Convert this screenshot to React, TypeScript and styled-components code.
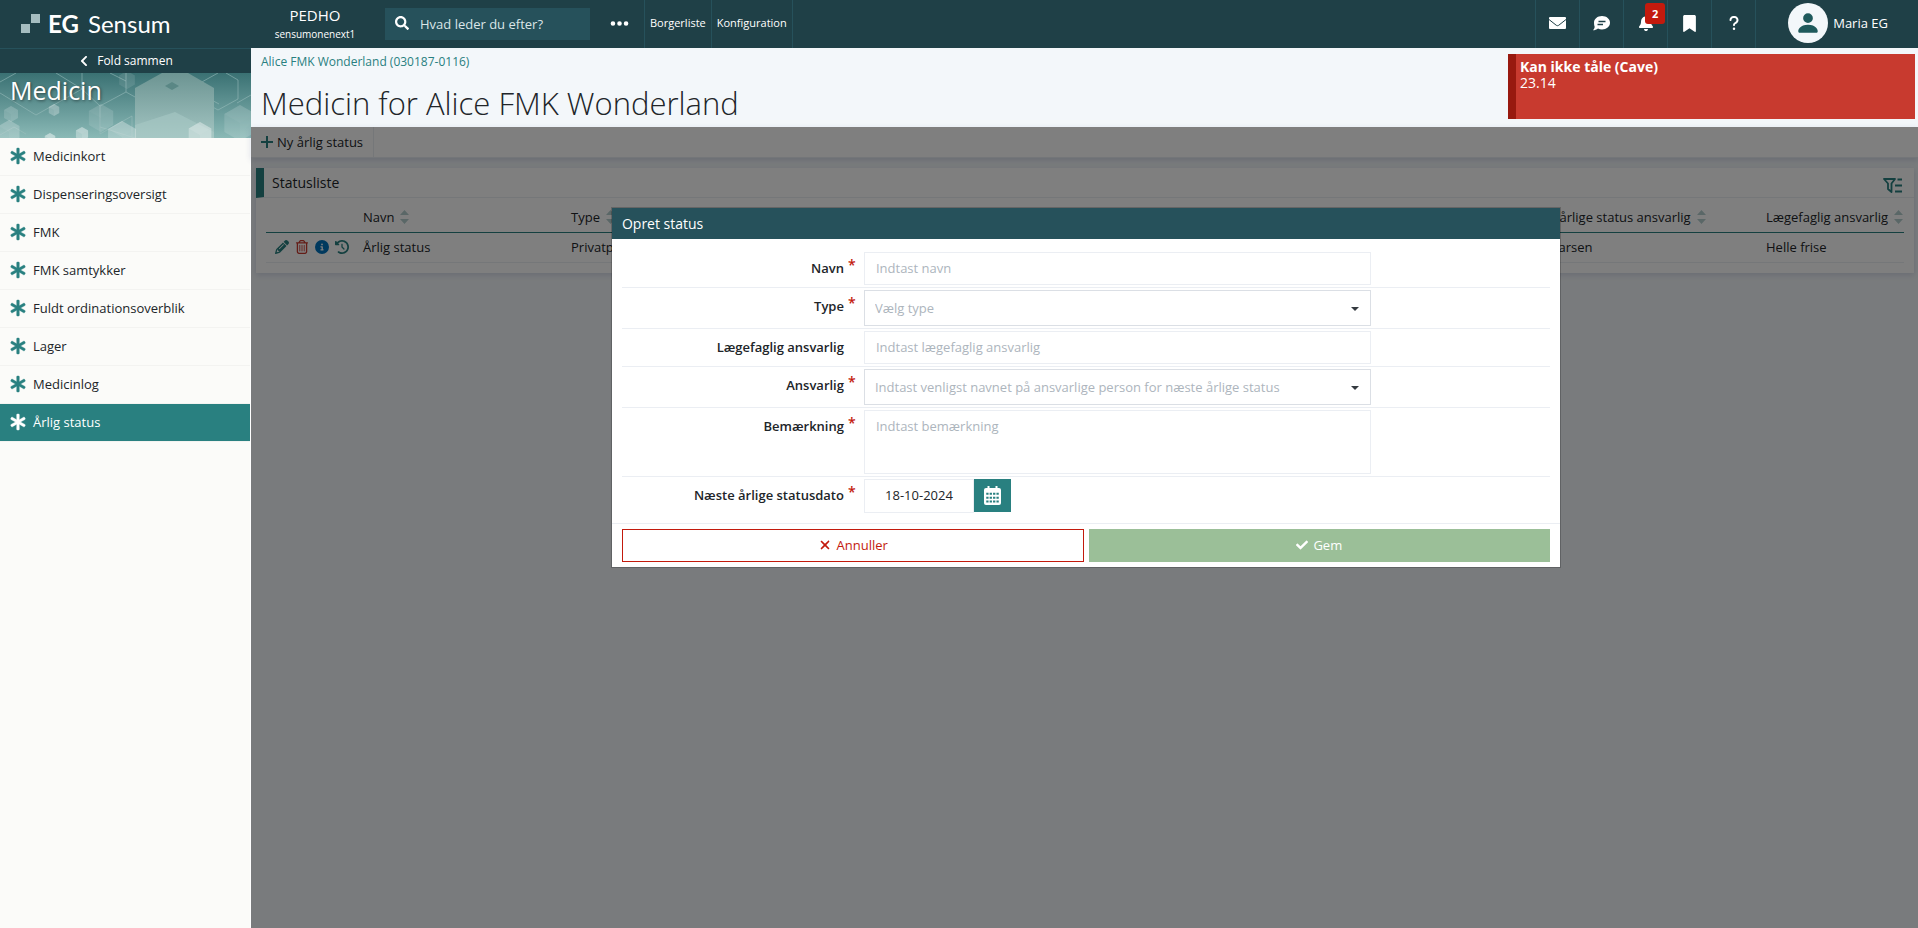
import React from 'react';
import styled, { createGlobalStyle } from 'styled-components';
import {
  FaEllipsis,
  FaBell,
  FaBookmark,
  FaQuestion,
  FaPencil,
  FaRegTrashCan,
  FaCircleInfo,
  FaClockRotateLeft,
  FaXmark,
} from 'react-icons/fa6';
import { FaAsterisk, FaCheck, FaChevronLeft, FaSearch } from 'react-icons/fa';
import { BsPersonFill } from 'react-icons/bs';

const color = {
  header: '#1f4047',
  headerLine: '#26515b',
  panel: '#26515b',
  teal: '#298080',
  text: '#212529',
  page: '#f3f7fa',
  line: '#ebeef3',
  red: '#c31a0d',
  muted: '#adb5bd',
};

const GlobalStyle = createGlobalStyle`
  *, *::before, *::after { box-sizing: border-box; }
  body {
    margin: 0;
    font-family: "Open Sans", "Noto Sans", sans-serif;
    font-size: 14px;
    line-height: 20px;
    color: ${color.text};
    background: ${color.page};
  }
  button, input, select, textarea { font: inherit; color: inherit; border-radius: 0; }
  a { color: inherit; text-decoration: none; }
`;

const Page = styled.div`
  display: flex;
  flex-direction: column;
  min-height: 100vh;
`;

/* Top bar */

const TopBar = styled.header`
  display: flex;
  height: 48px;
  background: ${color.header};
  color: #fff;
`;

const Logo = styled.a`
  display: flex;
  align-items: center;
  gap: 8px;
  width: 251px;
  padding-left: 20px;
  font-family: Lato, "Open Sans", sans-serif;
  font-size: 24px;
  line-height: 46px;
  white-space: nowrap;

  b { margin-right: 3px; }
`;

const Tenant = styled.div`
  display: flex;
  flex-direction: column;
  align-items: center;
  width: 128px;
  padding-top: 5px;
  font-size: 15px;
  line-height: 20px;

  small { font-size: 10px; line-height: 18px; }
`;

const SearchBox = styled.label`
  display: flex;
  align-items: center;
  gap: 11px;
  width: 205px;
  height: 32px;
  margin: 8px 0 0 6px;
  padding: 0 10px;
  background: ${color.panel};

  svg { flex: none; margin-bottom: 2px; }

  input {
    min-width: 0;
    flex: 1;
    padding: 0;
    border: 0;
    outline: 0;
    background: none;
    font-size: 13px;
  }
  input::placeholder { color: #dbe6e8; opacity: 1; }
`;

const MoreButton = styled.button`
  display: flex;
  align-items: center;
  justify-content: center;
  width: 54px;
  height: 46px;
  padding: 0 0 0 5px;
  border: 0;
  background: none;
`;

const NavLink = styled.a`
  padding: 0 5px;
  border-left: 1px solid ${color.headerLine};
  font-size: 11px;
  line-height: 46px;
  white-space: nowrap;

  &:last-child { border-right: 1px solid ${color.headerLine}; }
`;

const TopLinks = styled.nav`
  display: flex;
`;

const TopIcons = styled.div`
  display: flex;
  margin-left: auto;
  border-right: 1px solid ${color.headerLine};
`;

const TopIcon = styled.button`
  position: relative;
  display: flex;
  align-items: center;
  justify-content: center;
  width: 44px;
  padding: 0 0 2px;
  border: 0;
  border-left: 1px solid ${color.headerLine};
  background: none;
  color: #fff;
`;

const Badge = styled.span`
  position: absolute;
  top: 3px;
  right: 2px;
  width: 20px;
  border-radius: 3px;
  background: ${color.red};
  font-size: 11px;
  font-weight: 700;
  line-height: 21px;
`;

const User = styled.a`
  display: flex;
  align-items: center;
  gap: 5px;
  height: 46px;
  padding: 0 30px 0 32px;
  font-size: 13px;
`;

const Avatar = styled.span`
  display: flex;
  align-items: center;
  justify-content: center;
  width: 40px;
  height: 40px;
  border-radius: 50%;
  background: ${color.page};
  color: #1f5a5c;
`;

/* Side bar */

const Body = styled.div`
  display: flex;
  flex: 1;
`;

const SideBar = styled.aside`
  flex: none;
  width: 251px;
  border-right: 1px solid #fff;
  background: #fbfbf9;
`;

const FoldButton = styled.button`
  display: flex;
  align-items: center;
  justify-content: center;
  gap: 7px;
  width: 251px;
  height: 25px;
  padding: 0;
  border: 0;
  border-top: 1px solid ${color.headerLine};
  background: ${color.header};
  color: #fff;
  font-size: 12px;
`;

const Banner = styled.div`
  position: relative;
  width: 251px;
  height: 65px;

  svg { display: block; width: 100%; height: 100%; }

  h2 {
    position: absolute;
    top: 0;
    left: 10px;
    margin: 0;
    color: #fff;
    font-size: 25px;
    font-weight: 400;
    line-height: 34px;
    text-shadow: 1px 1px 3px rgba(0, 0, 0, 0.5);
  }
`;

const MenuItem = styled.a<{ $active?: boolean }>`
  display: flex;
  align-items: center;
  gap: 7px;
  height: 38px;
  padding: 0 0 2px 10px;
  border-bottom: 1px solid #f3f3f1;
  background: ${(p) => (p.$active ? color.teal : 'transparent')};
  color: ${(p) => (p.$active ? '#fff' : color.text)};
  font-size: 13px;

  svg {
    overflow: visible;
    color: ${(p) => (p.$active ? '#fff' : color.teal)};
    stroke: currentColor;
    stroke-width: 12px;
  }
`;

/* Main column */

const Main = styled.main`
  display: flex;
  flex: 1;
  flex-direction: column;
  min-width: 0;
`;

const PageHead = styled.div`
  display: flex;
  justify-content: space-between;
  height: 79px;
  padding: 0 3px 0 10px;
`;

const Crumb = styled.a`
  display: block;
  padding-top: 4px;
  color: ${color.teal};
  font-size: 12px;
  line-height: 20px;
`;

const Title = styled.h1`
  margin: 8px 0 0;
  font-size: 31px;
  font-weight: 300;
  line-height: 46px;
`;

const Cave = styled.section`
  width: 407px;
  height: 65px;
  margin-top: 6px;
  padding: 5px 4px;
  border-left: 8px solid #98190f;
  background: #c83a2f;
  color: #fff;
  line-height: 16px;

  strong { display: block; }
`;

const Content = styled.div`
  position: relative;
  flex: 1;
`;

const ToolBar = styled.div`
  display: flex;
  height: 31px;
  border-bottom: 1px solid #e8edf2;
  background: #fff;
  box-shadow: 0 2px 6px rgba(60, 80, 140, 0.18);
`;

const ToolButton = styled.button`
  display: flex;
  align-items: center;
  gap: 4px;
  padding: 0 10px;
  border: 0;
  border-right: 1px solid ${color.line};
  background: none;
  font-size: 13px;

  svg { color: ${color.teal}; }
`;

const Card = styled.section`
  margin: 10px 4px 0 5px;
  padding-bottom: 10px;
  background: #fff;
  box-shadow: 0 2px 6px rgba(60, 80, 140, 0.18);
`;

const CardHead = styled.div`
  display: flex;
  align-items: center;
  justify-content: space-between;
  height: 30px;
  padding: 0 11px 0 8px;
  border-left: 8px solid ${color.teal};
  border-bottom: 1px solid ${color.line};

  h3 { margin: 0; font-size: 14px; font-weight: 400; }
`;

const FilterButton = styled.button`
  display: flex;
  align-self: flex-end;
  padding: 0 0 4px;
  border: 0;
  background: none;
  color: ${color.teal};
`;

const Table = styled.table`
  width: calc(100% - 20px);
  margin: 0 10px;
  border-collapse: separate;
  border-spacing: 0;
  table-layout: fixed;
  font-size: 13px;
  white-space: nowrap;

  th {
    height: 35px;
    padding: 4px 0 0;
    border-bottom: 1px solid ${color.teal};
    font-weight: 400;
    text-align: left;
  }
  td {
    height: 30px;
    padding: 0 0 2px;
    border-bottom: 1px solid ${color.line};
  }
`;

const Heading = styled.span`
  display: flex;
  align-items: center;
  gap: 6px;
`;

const RowActions = styled.div`
  display: flex;
  gap: 6px;
  padding-left: 9px;
`;

const RowAction = styled.button<{ $tone: string }>`
  display: flex;
  padding: 0;
  border: 0;
  background: none;
  color: ${(p) => p.$tone};
`;

/* Dialog */

const Overlay = styled.div`
  position: absolute;
  inset: 0;
  display: flex;
  align-items: flex-start;
  justify-content: center;
  padding: 80px 0 0 3px;
  background: rgba(0, 0, 0, 0.5);
`;

const Dialog = styled.form`
  width: 57.1%;
  border: 1px solid rgba(0, 0, 0, 0.2);
  background: #fff;
  background-clip: padding-box;
`;

const DialogTitle = styled.h2`
  margin: 0;
  padding: 0 10px;
  background: ${color.panel};
  color: #fff;
  font-size: 14px;
  font-weight: 400;
  line-height: 31px;
`;

const Fields = styled.div`
  padding: 11px 10px 10px;
`;

const Row = styled.div`
  display: grid;
  grid-template-columns: 242fr 507fr 179fr;
  padding: 2px 0;
  border-bottom: 1px solid ${color.line};

  &:last-child { padding-bottom: 0; border-bottom: 0; }
`;

const Label = styled.label`
  display: flex;
  justify-content: flex-end;
  padding-right: 20px;
  font-size: 13px;
  font-weight: 600;
  line-height: 33px;
`;

const Star = styled.span`
  width: 12px;
  margin: -4px -16px 0 4px;
  color: ${color.red};
  font-size: 14px;
`;

const Input = styled.input`
  width: 100%;
  height: 33px;
  padding: 0 11px 2px;
  border: 1px solid ${color.line};
  background: #fff;
  font-size: 13px;

  &::placeholder { color: ${color.muted}; opacity: 1; }
`;

const TextArea = styled.textarea`
  display: block;
  width: 100%;
  height: 64px;
  padding: 5px 11px;
  border: 1px solid ${color.line};
  font-size: 13px;
  resize: none;

  &::placeholder { color: ${color.muted}; opacity: 1; }
`;

const SelectBox = styled.div`
  position: relative;

  select {
    display: block;
    width: 100%;
    height: 36px;
    padding: 0 30px 0 10px;
    border: 1px solid #dbdfe5;
    appearance: none;
    background: #fff;
    color: ${color.muted};
    font-size: 13px;
  }

  svg {
    position: absolute;
    top: 17px;
    right: 12px;
    pointer-events: none;
  }
`;

const DateField = styled.div`
  display: flex;

  input { width: 110px; height: 34px; text-align: center; }

  button {
    display: flex;
    align-items: center;
    justify-content: center;
    width: 37px;
    height: 33px;
    padding: 0;
    border: 0;
    background: ${color.teal};
    color: #fff;
  }
`;

const DialogFoot = styled.div`
  display: flex;
  gap: 5px;
  padding: 5px 10px;
  border-top: 1px solid ${color.line};
`;

const FootButton = styled.button<{ $primary?: boolean }>`
  display: flex;
  flex: 1;
  align-items: center;
  justify-content: center;
  gap: 5px;
  height: 33px;
  padding: 0 0 2px;
  border: 1px solid ${(p) => (p.$primary ? '#9bbf98' : color.red)};
  background: ${(p) => (p.$primary ? '#9bbf98' : '#fff')};
  color: ${(p) => (p.$primary ? '#fff' : color.red)};
  font-size: 13px;
`;

const LogoMark = () => (
  <svg width="20" height="20" viewBox="0 0 20 20" aria-hidden="true">
    <rect x="11" y="0" width="9" height="9" fill="#a5bdc0" />
    <rect x="1" y="10" width="9" height="9" fill="#a5bdc0" />
  </svg>
);

const EnvelopeIcon = () => (
  <svg width="17" height="12" viewBox="0 0 17 12" aria-hidden="true">
    <rect width="17" height="12" rx="1" fill="currentColor" />
    <path d="M0 2.500 7.300 8.300q1.200.8 2.400 0L17 2.500" fill="none" stroke={color.header} />
  </svg>
);

const ChatIcon = () => (
  <svg width="17" height="15" viewBox="0 0 17 15" aria-hidden="true">
    <path
      d="M9 0c4.500 0 8 2.900 8 6.700s-3.500 6.700-8 6.700c-1.500 0-2.800-.3-4-.9C3.600 13.600 1.800 14.300 0 14.300c.9-1 1.500-2.200 1.700-3.400C1.200 9.700 1 8.200 1 6.700 1 2.900 4.500 0 9 0z"
      fill="currentColor"
    />
    <path d="M5.500 5.500h7M4.500 8.500h5.500" stroke={color.header} strokeWidth="1.300" />
  </svg>
);

const PlusIcon = () => (
  <svg width="12" height="12" viewBox="0 0 12 12" aria-hidden="true">
    <path d="M6 0v12M0 6h12" stroke="currentColor" strokeWidth="2" />
  </svg>
);

const SortIcon = () => (
  <svg width="9" height="14" viewBox="0 0 9 14" fill="#b5cfcf" aria-hidden="true">
    <path d="M4.500 0 9 5H0zM4.500 14 0 9h9z" />
  </svg>
);

const FilterIcon = () => (
  <svg width="20" height="15" viewBox="0 0 20 15" fill="none" stroke="currentColor" aria-hidden="true">
    <path d="M1 1h11L8.500 5.500v8.500L5 11V5.500z" strokeWidth="1.800" strokeLinejoin="round" />
    <path d="M14.500 1.500H19M12 7.500h7M12 13.500h7" strokeWidth="1.800" />
  </svg>
);

const CalendarIcon = () => (
  <svg width="17" height="19" viewBox="0 0 17 19" aria-hidden="true">
    <rect x="0" y="2" width="17" height="17" rx="2" fill="currentColor" />
    <path d="M4.500 0v3M12.500 0v3" stroke="currentColor" strokeWidth="2" />
    <path d="M2.250 7.750h12.500M2.250 11.750h12.500M2.250 15.500h12.500" stroke={color.teal} strokeWidth="1.800" strokeDasharray="2.300 1.100" />
  </svg>
);

const Caret = () => (
  <svg width="8" height="4" viewBox="0 0 8 4" aria-hidden="true">
    <path d="M0 0h8L4 4z" fill="#343a40" />
  </svg>
);

const Cube = ({ x, y, r, o }: { x: number; y: number; r: number; o: number }) => {
  const w = r * 0.87;
  return (
    <g fill="#fff" opacity={o}>
      <path d={`M${x} ${y - r}l${w} ${r / 2}v${r}l${-w} ${r / 2}l${-w} ${-r / 2}v${-r}z`} opacity=".6" />
      <path d={`M${x} ${y}l${w} ${-r / 2}v${r}l${-w} ${r / 2}z`} opacity=".3" />
      <path d={`M${x} ${y - r}l${w} ${r / 2}l${-w} ${r / 2}l${-w} ${-r / 2}z`} opacity=".4" />
    </g>
  );
};

const BannerArt = () => (
  <svg viewBox="0 0 251 65" preserveAspectRatio="none" aria-hidden="true">
    <defs>
      <linearGradient id="sky" x1="0" y1="0" x2="0" y2="1">
        <stop offset="0" stopColor="#3a7173" />
        <stop offset="1" stopColor="#8ab9b6" />
      </linearGradient>
      <linearGradient id="block" x1="0" y1="0" x2="0" y2="1">
        <stop offset="0" stopColor="#6c9492" />
        <stop offset="1" stopColor="#a3c5c2" />
      </linearGradient>
    </defs>
    <rect width="251" height="65" fill="url(#sky)" />
    <g fill="none" stroke="#9cc0bd" strokeOpacity=".55">
      <path d="M0 9 16 0M0 20l36 22 46-26V0M56 0l26 16M100 33l26-14V0M100 33v28l32-18v22M82 16l18 17M126 19l9 5M110 0l16 8" />
      <path d="M200 10l18-10M200 10v17l18 10 20-11V7L226 0M206 12v12l13 7M251 22l-14 8M100 54l35 11M0 62l14-8 12 7" />
    </g>
    <path d="M135 15 162 0h26l26 15v50h-79z" fill="url(#block)" />
    <path d="M135 52l40-13 39 20v6h-79z" fill="#a9cac7" opacity=".55" />
    <path d="m165 13 7-4 7 4-7 4z" fill="#5a8785" />
    <Cube x={11} y={41} r={8} o={0.25} />
    <Cube x={54} y={37} r={6} o={0.4} />
    <Cube x={101} y={45} r={14} o={0.18} />
    <Cube x={127} y={7} r={9} o={0.15} />
    <Cube x={9} y={59} r={12} o={0.3} />
    <Cube x={82} y={61} r={7} o={0.55} />
    <Cube x={50} y={66} r={6} o={0.6} />
    <Cube x={122} y={64} r={16} o={0.4} />
    <Cube x={200} y={62} r={13} o={0.5} />
    <Cube x={240} y={50} r={18} o={0.22} />
  </svg>
);

const menu = [
  'Medicinkort',
  'Dispenseringsoversigt',
  'FMK',
  'FMK samtykker',
  'Fuldt ordinationsoverblik',
  'Lager',
  'Medicinlog',
  'Årlig status',
];

const SortHeading = ({ children }: { children: React.ReactNode }) => (
  <Heading>
    {children}
    <SortIcon />
  </Heading>
);

type FieldProps = { id: string; label: string; required?: boolean; children: React.ReactNode };

const Field = ({ id, label, required, children }: FieldProps) => (
  <Row>
    <Label htmlFor={id}>
      {label}
      {required && <Star>*</Star>}
    </Label>
    {children}
  </Row>
);

const Select = ({ id, placeholder }: { id: string; placeholder: string }) => (
  <SelectBox>
    <select id={id} defaultValue="">
      <option value="">{placeholder}</option>
    </select>
    <Caret />
  </SelectBox>
);

export default function App() {
  return (
    <Page>
      <GlobalStyle />
      <TopBar>
        <Logo href="#">
          <LogoMark />
          <span>
            <b>EG</b> Sensum
          </span>
        </Logo>
        <Tenant>
          PEDHO
          <small>sensumonenext1</small>
        </Tenant>
        <SearchBox>
          <FaSearch size={14} />
          <input type="search" aria-label="Søg" placeholder="Hvad leder du efter?" />
        </SearchBox>
        <MoreButton type="button" aria-label="Mere">
          <FaEllipsis size={21} color="#fff" />
        </MoreButton>
        <TopLinks>
          <NavLink href="#">Borgerliste</NavLink>
          <NavLink href="#">Konfiguration</NavLink>
        </TopLinks>
        <TopIcons>
          <TopIcon type="button" aria-label="Beskeder">
            <EnvelopeIcon />
          </TopIcon>
          <TopIcon type="button" aria-label="Chat">
            <ChatIcon />
          </TopIcon>
          <TopIcon type="button" aria-label="Notifikationer">
            <FaBell size={16} />
            <Badge>2</Badge>
          </TopIcon>
          <TopIcon type="button" aria-label="Bogmærker">
            <FaBookmark size={17} />
          </TopIcon>
          <TopIcon type="button" aria-label="Hjælp">
            <FaQuestion size={16} />
          </TopIcon>
        </TopIcons>
        <User href="#">
          <Avatar>
            <BsPersonFill size={26} />
          </Avatar>
          Maria EG
        </User>
      </TopBar>

      <Body>
        <SideBar>
          <FoldButton type="button">
            <FaChevronLeft size={12} />
            Fold sammen
          </FoldButton>
          <Banner>
            <BannerArt />
            <h2>Medicin</h2>
          </Banner>
          <nav>
            {menu.map((name) => (
              <MenuItem key={name} href="#" $active={name === 'Årlig status'}>
                <FaAsterisk size={16} />
                {name}
              </MenuItem>
            ))}
          </nav>
        </SideBar>

        <Main>
          <PageHead>
            <div>
              <Crumb href="#">Alice FMK Wonderland (030187-0116)</Crumb>
              <Title>Medicin for Alice FMK Wonderland</Title>
            </div>
            <Cave>
              <strong>Kan ikke tåle (Cave)</strong>
              23.14
            </Cave>
          </PageHead>

          <Content>
            <ToolBar>
              <ToolButton type="button">
                <PlusIcon />
                Ny årlig status
              </ToolButton>
            </ToolBar>
            <Card>
              <CardHead>
                <h3>Statusliste</h3>
                <FilterButton type="button" aria-label="Filtrer">
                  <FilterIcon />
                </FilterButton>
              </CardHead>
              <Table>
                <colgroup>
                  <col width="97" />
                  <col width="208" />
                  <col />
                  <col width="249" />
                  <col width="138" />
                </colgroup>
                <thead>
                  <tr>
                    <th />
                    <th><SortHeading>Navn</SortHeading></th>
                    <th><SortHeading>Type</SortHeading></th>
                    <th><SortHeading>Næste årlige status ansvarlig</SortHeading></th>
                    <th><SortHeading>Lægefaglig ansvarlig</SortHeading></th>
                  </tr>
                </thead>
                <tbody>
                  <tr>
                    <td>
                      <RowActions>
                        <RowAction type="button" $tone={color.teal} aria-label="Rediger"><FaPencil size={14} /></RowAction>
                        <RowAction type="button" $tone="#c83a2f" aria-label="Slet"><FaRegTrashCan size={14} /></RowAction>
                        <RowAction type="button" $tone="#0072bc" aria-label="Info"><FaCircleInfo size={14} /></RowAction>
                        <RowAction type="button" $tone={color.teal} aria-label="Historik"><FaClockRotateLeft size={14} /></RowAction>
                      </RowActions>
                    </td>
                    <td>Årlig status</td>
                    <td>Privatperson</td>
                    <td>Anna Larsen</td>
                    <td>Helle frise</td>
                  </tr>
                </tbody>
              </Table>
            </Card>

            <Overlay>
              <Dialog role="dialog" aria-labelledby="dialog-title">
                <DialogTitle id="dialog-title">Opret status</DialogTitle>
                <Fields>
                  <Field id="navn" label="Navn" required>
                    <Input id="navn" placeholder="Indtast navn" />
                  </Field>
                  <Field id="type" label="Type" required>
                    <Select id="type" placeholder="Vælg type" />
                  </Field>
                  <Field id="laege" label="Lægefaglig ansvarlig">
                    <Input id="laege" placeholder="Indtast lægefaglig ansvarlig" />
                  </Field>
                  <Field id="ansvarlig" label="Ansvarlig" required>
                    <Select
                      id="ansvarlig"
                      placeholder="Indtast venligst navnet på ansvarlige person for næste årlige status"
                    />
                  </Field>
                  <Field id="note" label="Bemærkning" required>
                    <TextArea id="note" placeholder="Indtast bemærkning" />
                  </Field>
                  <Field id="dato" label="Næste årlige statusdato" required>
                    <DateField>
                      <Input id="dato" defaultValue="18-10-2024" />
                      <button type="button" aria-label="Vælg dato">
                        <CalendarIcon />
                      </button>
                    </DateField>
                  </Field>
                </Fields>
                <DialogFoot>
                  <FootButton type="button">
                    <FaXmark size={14} />
                    Annuller
                  </FootButton>
                  <FootButton type="submit" $primary>
                    <FaCheck size={12} />
                    Gem
                  </FootButton>
                </DialogFoot>
              </Dialog>
            </Overlay>
          </Content>
        </Main>
      </Body>
    </Page>
  );
}
